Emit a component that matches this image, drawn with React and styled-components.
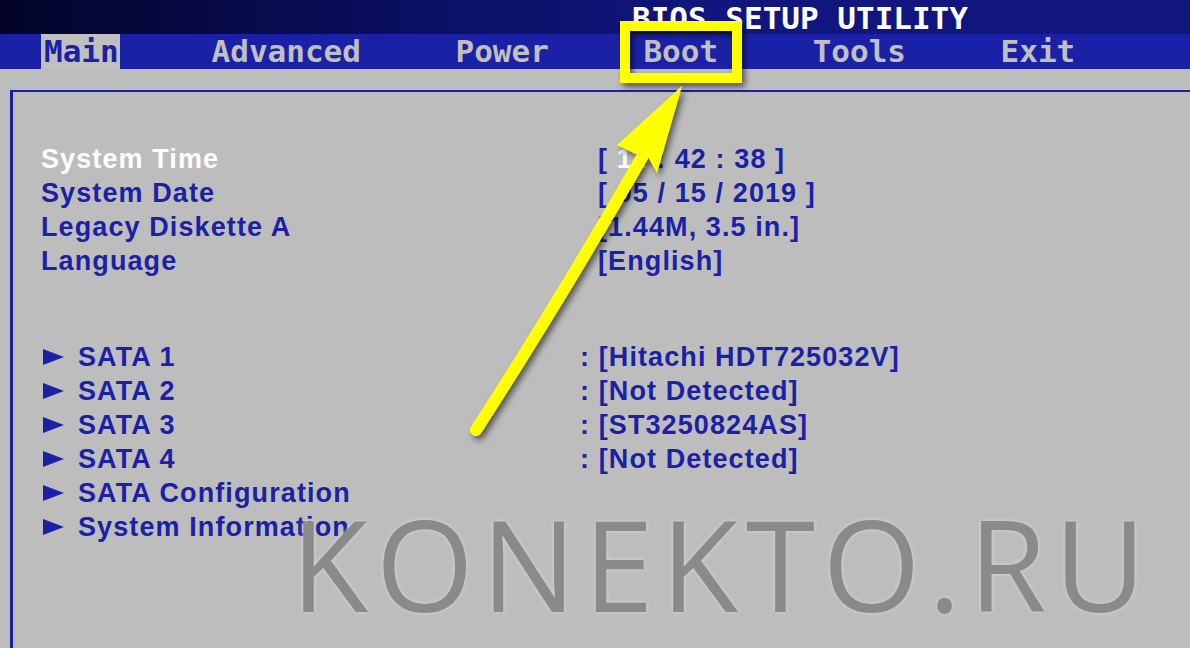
import React from "react";
import styled, { createGlobalStyle } from "styled-components";

const Global = createGlobalStyle`
  html, body {
    margin: 0;
    padding: 0;
    background: #bdbdbd;
  }
  #root {
    height: 100vh;
  }
`;

const BLUE = "#1b21a6";
const GRAY = "#bdbdbd";

const Page = styled.div`
  position: relative;
  height: 100vh;
  overflow: hidden;
  display: flex;
  flex-direction: column;
  background: ${GRAY};
`;

const TitleBar = styled.div`
  height: 34px;
  padding: 1px 0 0 632px;
  box-sizing: border-box;
  background: linear-gradient(90deg, #030428 0%, #0b0f62 35%, #11167e 60%, #12177f 100%);
  color: #ffffff;
  font: bold 31px/34px "DejaVu Sans Mono", monospace;
  white-space: nowrap;
`;

const MenuBar = styled.div`
  height: 35px;
  display: flex;
  gap: 88.6px;
  padding-left: 41px;
  background: ${BLUE};
`;

const MenuItem = styled.div`
  padding: 0 3px;
  height: 35px;
  font: bold 31px/34px "DejaVu Sans Mono", monospace;
  color: ${(p) => (p.$active ? BLUE : "#c0c0c0")};
  background: ${(p) => (p.$active ? "#c0c0c0" : "transparent")};
  width: ${(p) => (p.$active ? "73px" : "auto")};
`;

const Panel = styled.div`
  flex: 1;
  margin: 21px 0 0 10px;
  border-top: 2px solid ${BLUE};
  border-left: 3px solid ${BLUE};
  padding: 50px 0 0 28px;
  font: bold 27px/34px "Liberation Sans", Arial, sans-serif;
  letter-spacing: 1.1px;
  color: ${BLUE};
`;

const Group = styled.div`
  display: grid;
  grid-template-columns: 539px 1fr;
  grid-auto-rows: 34px;
  margin-top: ${(p) => p.$offset || 0}px;
`;

const Label = styled.div`
  display: flex;
  align-items: center;
  gap: 14px;
  padding-left: ${(p) => (p.$sub ? "2px" : "0")};
  color: ${(p) => (p.$hot ? "#ffffff" : BLUE)};
  white-space: nowrap;
`;

const Value = styled.div`
  padding-left: ${(p) => (p.$indent ? "18px" : "0")};
  white-space: pre;
`;

const Hot = styled.span`
  color: #ffffff;
`;

const Watermark = styled.div`
  position: absolute;
  left: 291px;
  top: 500px;
  font: 400 126px/1 "Open Sans", sans-serif;
  letter-spacing: 7.5px;
  color: #8a8a8a;
  text-shadow: 0 0 4px rgba(225, 225, 215, 0.8);
  white-space: nowrap;
  pointer-events: none;
`;

const Overlay = styled.svg`
  position: absolute;
  left: 0;
  top: 0;
  pointer-events: none;
`;

const Triangle = () => (
  <svg width="21" height="16" viewBox="0 0 21 16">
    <polygon points="0,0 21,8 0,16" fill={BLUE} />
  </svg>
);

const top = [
  { label: "System Time", hot: true, value: <>[ <Hot>11</Hot> : 42 : 38 ]</> },
  { label: "System Date", value: "[ 05 / 15 / 2019 ]" },
  { label: "Legacy Diskette A", value: "[1.44M, 3.5 in.]" },
  { label: "Language", value: "[English]" },
];

const drives = [
  { label: "SATA 1", value: ": [Hitachi HDT725032V]" },
  { label: "SATA 2", value: ": [Not Detected]" },
  { label: "SATA 3", value: ": [ST3250824AS]" },
  { label: "SATA 4", value: ": [Not Detected]" },
  { label: "SATA Configuration" },
  { label: "System Information" },
];

const menu = ["Main", "Advanced", "Power", "Boot", "Tools", "Exit"];

export default function App() {
  return (
    <Page>
      <Global />
      <TitleBar>BIOS SETUP UTILITY</TitleBar>
      <MenuBar>
        {menu.map((m, i) => (
          <MenuItem key={m} $active={i === 0}>
            {m}
          </MenuItem>
        ))}
      </MenuBar>
      <Panel>
        <Group>
          {top.map((r) => (
            <React.Fragment key={r.label}>
              <Label $hot={r.hot}>{r.label}</Label>
              <Value $indent>{r.value}</Value>
            </React.Fragment>
          ))}
        </Group>
        <Group $offset={62}>
          {drives.map((r) => (
            <React.Fragment key={r.label}>
              <Label $sub>
                <Triangle />
                {r.label}
              </Label>
              <Value>{r.value || ""}</Value>
            </React.Fragment>
          ))}
        </Group>
      </Panel>
      <Watermark>KONEKTO.RU</Watermark>
      <Overlay width="1190" height="648" viewBox="0 0 1190 648">
        <defs>
          <filter id="sh" x="-20%" y="-20%" width="140%" height="140%">
            <feDropShadow dx="3" dy="4" stdDeviation="3" floodColor="#000" floodOpacity="0.55" />
          </filter>
        </defs>
        <g filter="url(#sh)">
          <rect x="625" y="26" width="112" height="52" fill="none" stroke="#ffff00" strokeWidth="10" />
          <path
            d="M476 430 Q560 300 645 152"
            fill="none"
            stroke="#ffff00"
            strokeWidth="12"
            strokeLinecap="round"
          />
          <polygon points="682,86 657,173 646,153 636,154 617,145" fill="#ffff00" />
        </g>
      </Overlay>
    </Page>
  );
}
